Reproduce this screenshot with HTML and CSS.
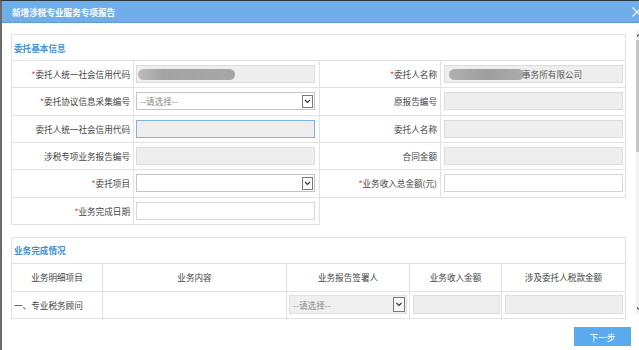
FILE: index.html
```html
<!DOCTYPE html>
<html lang="zh-CN">
<head>
<meta charset="utf-8">
<title>新增涉税专业服务专项报告</title>
<link rel="stylesheet" href="styles.css">
</head>
<body>
<div class="dialog">
  <div class="titlebar">
    <span class="title">新增涉税专业服务专项报告</span>
    <svg class="close" width="10" height="10" viewBox="0 0 10 10"><path d="M0.5 0.5L9.5 9.5M9.5 0.5L0.5 9.5" stroke="#fff" stroke-width="1.1" fill="none"/></svg>
  </div>
  <div class="main">
    <div class="scroll">
      <div class="sec">
        <div class="sec-title">委托基本信息</div>
        <div class="grid1">
          <div class="cell lbl first"><i>*</i>委托人统一社会信用代码</div>
          <div class="cell fld fl"><div class="inp dis"><span class="blob b1"></span></div></div>
          <div class="cell lbl"><i>*</i>委托人名称</div>
          <div class="cell fld fr"><div class="inp dis"><span class="blob b2"></span><span class="val">事务所有限公司</span></div></div>

          <div class="cell lbl first"><i>*</i>委托协议信息采集编号</div>
          <div class="cell fld fl"><div class="inp sel"><span class="ph">--请选择--</span><svg class="arr" width="11" height="13" viewBox="0 0 11 13"><rect x="0.5" y="0.5" width="10" height="12" fill="#fff" stroke="#7a7a7a"/><path d="M3 5L5.5 7.5L8 5" stroke="#333" stroke-width="1.1" fill="none"/></svg></div></div>
          <div class="cell lbl">原报告编号</div>
          <div class="cell fld fr"><div class="inp dis"></div></div>

          <div class="cell lbl first">委托人统一社会信用代码</div>
          <div class="cell fld fl"><div class="inp dis focus"></div></div>
          <div class="cell lbl">委托人名称</div>
          <div class="cell fld fr"><div class="inp dis"></div></div>

          <div class="cell lbl first">涉税专项业务报告编号</div>
          <div class="cell fld fl"><div class="inp dis"></div></div>
          <div class="cell lbl">合同金额</div>
          <div class="cell fld fr"><div class="inp dis"></div></div>

          <div class="cell lbl first"><i>*</i>委托项目</div>
          <div class="cell fld fl"><div class="inp sel"><span class="ph"></span><svg class="arr" width="11" height="13" viewBox="0 0 11 13"><rect x="0.5" y="0.5" width="10" height="12" fill="#fff" stroke="#7a7a7a"/><path d="M3 5L5.5 7.5L8 5" stroke="#333" stroke-width="1.1" fill="none"/></svg></div></div>
          <div class="cell lbl"><i>*</i>业务收入总金额(元)</div>
          <div class="cell fld fr"><div class="inp wht"></div></div>

          <div class="cell lbl first"><i>*</i>业务完成日期</div>
          <div class="cell fld fl"><div class="inp wht"></div></div>
        </div>
      </div>

      <div class="sec sec2">
        <div class="sec-title t2">业务完成情况</div>
        <div class="grid2">
          <div class="cell hd first">业务明细项目</div>
          <div class="cell hd">业务内容</div>
          <div class="cell hd">业务报告签署人</div>
          <div class="cell hd">业务收入金额</div>
          <div class="cell hd">涉及委托人税款金额</div>

          <div class="cell txt first">一、专业税务顾问</div>
          <div class="cell"></div>
          <div class="cell f3"><div class="inp sel dsel"><span class="ph">--请选择--</span><svg class="arr" width="12" height="15" viewBox="0 0 12 15"><rect x="0.5" y="0.5" width="11" height="14" fill="#f7f7f7" stroke="#7a7a7a"/><path d="M3.5 6L6 8.5L8.5 6" stroke="#333" stroke-width="1.1" fill="none"/></svg></div></div>
          <div class="cell f4"><div class="inp dis tall"></div></div>
          <div class="cell f5"><div class="inp dis tall"></div></div>

          <div class="cell first"></div>
          <div class="cell"></div>
          <div class="cell"></div>
          <div class="cell"></div>
          <div class="cell"></div>
        </div>
      </div>
    </div>
    <div class="scrollbar">
      <svg class="sb-btn" width="12" height="10" viewBox="0 0 12 10"><path d="M1 6.5L4.5 3L8 6.5" stroke="#444" stroke-width="1.1" fill="none"/></svg>
      <div class="thumb"></div>
      <div class="sb-fill"></div>
      <svg class="sb-btn" width="12" height="10" viewBox="0 0 12 10"><path d="M1 3.5L4.5 7L8 3.5" stroke="#444" stroke-width="1.1" fill="none"/></svg>
    </div>
  </div>
  <div class="footer">
    <button class="next" type="button">下一步</button>
  </div>
</div>
</body>
</html>
```
FILE: styles.css
```css
html, body {
  margin: 0;
  padding: 0;
}
body {
  width: 639px;
  height: 350px;
  overflow: hidden;
  background: #fff;
  font-family: "Noto Sans CJK SC", "Noto Sans", sans-serif;
  font-size: 8.6px;
  color: #444;
}
.dialog {
  width: 648px;
  height: 350px;
  box-sizing: border-box;
  border-left: 2px solid #6a6a6a;
  border-top: 1px solid #2b3846;
  display: flex;
  flex-direction: column;
  background: #fff;
}
.titlebar {
  height: 22px;
  box-sizing: border-box;
  background: #70aeea;
  border-bottom: 1px solid #5d9bd8;
  display: flex;
  align-items: center;
  justify-content: space-between;
  padding-left: 10px;
}
.title {
  color: #fff;
  font-weight: bold;
}
.close {
  margin-right: 6px;
}
.main {
  display: flex;
  height: 297px;
}
.scroll {
  width: 634px;
  box-sizing: border-box;
  padding: 11px 10px 0 9px;
  overflow: hidden;
}
.scrollbar {
  width: 12px;
  margin: 7px 0 6px;
  background: #f1f1f1;
  display: flex;
  flex-direction: column;
}
.sb-btn {
  display: block;
  flex: none;
}
.thumb {
  height: 112px;
  background: #c6c6c6;
  flex: none;
}
.sb-fill {
  flex: 1;
}
.sec-title {
  height: 27px;
  box-sizing: border-box;
  border: 1px solid #e2e2e2;
  color: #3d8fd8;
  font-weight: bold;
  padding-left: 2px;
  display: flex;
  align-items: center;
}
.sec-title.t2 {
  height: 26px;
  border-bottom: none;
}
.sec2 {
  margin-top: 12px;
}
.grid1 {
  display: grid;
  grid-template-columns: 123px 186px 121px 185px;
  grid-auto-rows: 27.33px;
}
.grid2 {
  display: grid;
  grid-template-columns: 92px 184px 123px 92px 124px;
  grid-template-rows: 28px 27px 27px;
  border-top: 1px solid #e2e2e2;
}
.cell {
  box-sizing: border-box;
  border-right: 1px solid #e2e2e2;
  border-bottom: 1px solid #e2e2e2;
  display: flex;
  align-items: center;
  min-width: 0;
}
.cell.first {
  border-left: 1px solid #e2e2e2;
}
.lbl {
  justify-content: flex-end;
  padding-right: 3px;
  white-space: nowrap;
}
.lbl i {
  font-style: normal;
  color: #e8383d;
}
.fl {
  padding: 0 4px 0 2px;
}
.fr {
  padding: 0 2px 0 3px;
}
.inp {
  width: 100%;
  height: 18px;
  box-sizing: border-box;
  border: 1px solid #dcdcdc;
  display: flex;
  align-items: center;
  padding-left: 3px;
  white-space: nowrap;
  overflow: hidden;
}
.inp.dis {
  background: #eeeeee;
}
.inp.focus {
  border-color: #7eb1e3;
}
.inp.wht {
  background: #fff;
  border-color: #d6d6d6;
}
.inp.sel {
  background: #fff;
  border-color: #c4c4c4;
  justify-content: space-between;
  padding-right: 1px;
}
.inp.dsel {
  background: #efefef;
  border-color: #e0e0e0;
  height: 19px;
}
.inp.tall {
  height: 19px;
}
.ph {
  color: #888;
}
.arr {
  display: block;
  flex: none;
}
.blob {
  display: inline-block;
  height: 11px;
  border-radius: 6px;
  flex: none;
}
.b1 {
  width: 97px;
  margin-left: -2px;
  background: linear-gradient(90deg, #bdbdbd 0%, #a3a3a3 25%, #a6a6a6 100%);
}
.b2 {
  width: 75px;
  margin-left: 1px;
  background: linear-gradient(90deg, #b0b0b0 0%, #9e9e9e 50%, #acacac 100%);
}
.val {
  color: #555;
  margin-left: -2px;
}
.hd {
  justify-content: center;
}
.txt {
  padding-left: 2px;
  white-space: nowrap;
}
.f3 {
  padding: 0 2px 0 2px;
}
.f4 {
  padding: 0 1px 0 3px;
}
.f5 {
  padding: 0 2px 0 3px;
}
.footer {
  flex: 1;
  display: flex;
  justify-content: flex-end;
  align-items: flex-start;
  padding: 7px 17px 0 0;
}
.next {
  width: 57px;
  height: 19px;
  border: none;
  background: #5aaaf0;
  color: #fff;
  font-family: inherit;
  font-size: 8.6px;
  padding: 0;
}
```
